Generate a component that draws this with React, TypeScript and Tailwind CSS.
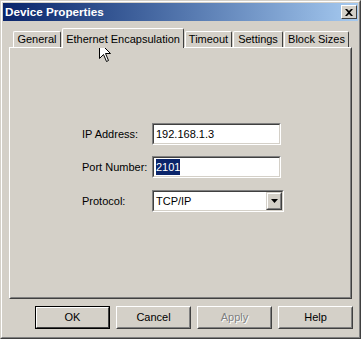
import React from "react";

const tabs = [
  { label: "General", w: "w-[48px]", active: false },
  { label: "Ethernet Encapsulation", w: "w-[122px]", active: true },
  { label: "Timeout", w: "w-[47px]", active: false },
  { label: "Settings", w: "w-[50px]", active: false },
  { label: "Block Sizes", w: "w-[65px]", active: false },
];

// classic sunken edit box border
const sunken =
  "border-t border-l border-t-[#808080] border-l-[#808080] border-b border-r border-b-white border-r-white";
const sunkenInner =
  "border-t border-l border-t-[#404040] border-l-[#404040] border-b border-r border-b-[#d4d0c8] border-r-[#d4d0c8]";

const Button = ({ label, disabled }: { label: string; disabled?: boolean }) => (
  <div className="flex h-[23px] w-[75px] items-center justify-center border border-t-white border-l-white border-r-[#404040] border-b-[#404040]">
    <div className="flex h-full w-full items-center justify-center border border-transparent border-r-[#808080] border-b-[#808080]">
      <span className={disabled ? "text-[#808080] [text-shadow:1px_1px_0_#ffffff]" : "text-black"}>{label}</span>
    </div>
  </div>
);

const Cursor = () => (
  <svg className="absolute left-[98px] top-[41px]" width="13" height="21" viewBox="0 0 13 21">
    <path
      d="M0.5 0.5 L0.5 16.5 L4.5 12.5 L7.5 19.5 L9.5 18.5 L6.5 11.5 L11.5 11.5 Z"
      fill="#ffffff"
      stroke="#000000"
      strokeWidth="1"
    />
  </svg>
);

export default function App() {
  return (
    <div
      className="relative h-[339px] w-[361px] overflow-hidden border border-t-[#d4d0c8] border-l-[#d4d0c8] border-r-[#404040] border-b-[#404040] bg-[#d4d0c8] text-[11px] text-black"
      style={{ fontFamily: '"Liberation Sans", Arial, sans-serif' }}
    >
      <div className="flex h-full flex-col border border-t-white border-l-white border-r-[#808080] border-b-[#808080] p-[1px]">
        {/* Title bar */}
        <div className="flex h-[18px] items-center justify-between bg-gradient-to-r from-[#0a246a] to-[#a6caf0] pl-[2px] pr-[1px]">
          <span className="text-[11.7px] font-bold text-white">Device Properties</span>
          <div className="flex h-[14px] w-[16px] items-center justify-center border border-t-white border-l-white border-r-[#404040] border-b-[#404040] bg-[#d4d0c8]">
            <svg width="8" height="7" viewBox="0 0 8 7">
              <path d="M0 0 L2 0 L4 2 L6 0 L8 0 L5 3.5 L8 7 L6 7 L4 5 L2 7 L0 7 L3 3.5 Z" fill="#000" />
            </svg>
          </div>
        </div>

        {/* Tabs */}
        <div className="flex h-[26px] items-end gap-[1px] pl-[10px] pt-[7px]">
          {tabs.map((t) =>
            t.active ? (
              <div
                key={t.label}
                className={`relative z-10 -mb-[1px] flex h-[20px] items-start justify-center rounded-t-[2px] border border-b-0 border-t-white border-l-white border-r-[#404040] bg-[#d4d0c8] pt-[2px] ${t.w}`}
              >
                {t.label}
              </div>
            ) : (
              <div
                key={t.label}
                className={`flex h-[16px] items-center justify-center rounded-t-[2px] border border-b-0 border-t-white border-l-white border-r-[#404040] ${t.w}`}
              >
                {t.label}
              </div>
            )
          )}
        </div>

        {/* Panel */}
        <div className="ml-[6px] h-[252px] w-[343px] border border-t-white border-l-white border-r-[#404040] border-b-[#404040]">
          <div className="flex h-full w-full flex-col gap-[11px] border border-transparent border-r-[#808080] border-b-[#808080] pl-[71px] pt-[74px]">
            <div className="flex items-center">
              <span className="w-[70px]">IP Address:</span>
              <div className={`${sunken} h-[22px] w-[129px]`}>
                <div className={`${sunkenInner} flex h-full items-center bg-white pl-[2px]`}>192.168.1.3</div>
              </div>
            </div>
            <div className="flex items-center">
              <span className="w-[70px]">Port Number:</span>
              <div className={`${sunken} h-[22px] w-[129px]`}>
                <div className={`${sunkenInner} flex h-full items-center bg-white pl-[2px]`}>
                  <span className="bg-[#0a246a] text-white">2101</span>
                </div>
              </div>
            </div>
            <div className="mt-[1px] flex items-center">
              <span className="w-[70px]">Protocol:</span>
              <div className={`${sunken} h-[22px] w-[132px]`}>
                <div className={`${sunkenInner} flex h-full items-center bg-white pl-[2px]`}>
                  <span className="flex-1">TCP/IP</span>
                  <div className="flex h-[18px] w-[16px] items-center justify-center border border-t-[#d4d0c8] border-l-[#d4d0c8] border-r-[#404040] border-b-[#404040] bg-[#d4d0c8]">
                    <div className="flex h-full w-full items-center justify-center border border-t-white border-l-white border-r-[#808080] border-b-[#808080]">
                      <svg width="7" height="4" viewBox="0 0 7 4">
                        <path d="M0 0 L7 0 L3.5 4 Z" fill="#000" />
                      </svg>
                    </div>
                  </div>
                </div>
              </div>
            </div>
          </div>
        </div>

        {/* Buttons */}
        <div className="mt-[7px] flex justify-end gap-[6px] pr-[5px]">
          <div className="border border-black">
            <div className="flex h-[21px] w-[73px] items-center justify-center border border-t-white border-l-white border-r-[#404040] border-b-[#404040]">
              OK
            </div>
          </div>
          <Button label="Cancel" />
          <Button label="Apply" disabled />
          <Button label="Help" />
        </div>
      </div>
      <Cursor />
    </div>
  );
}
